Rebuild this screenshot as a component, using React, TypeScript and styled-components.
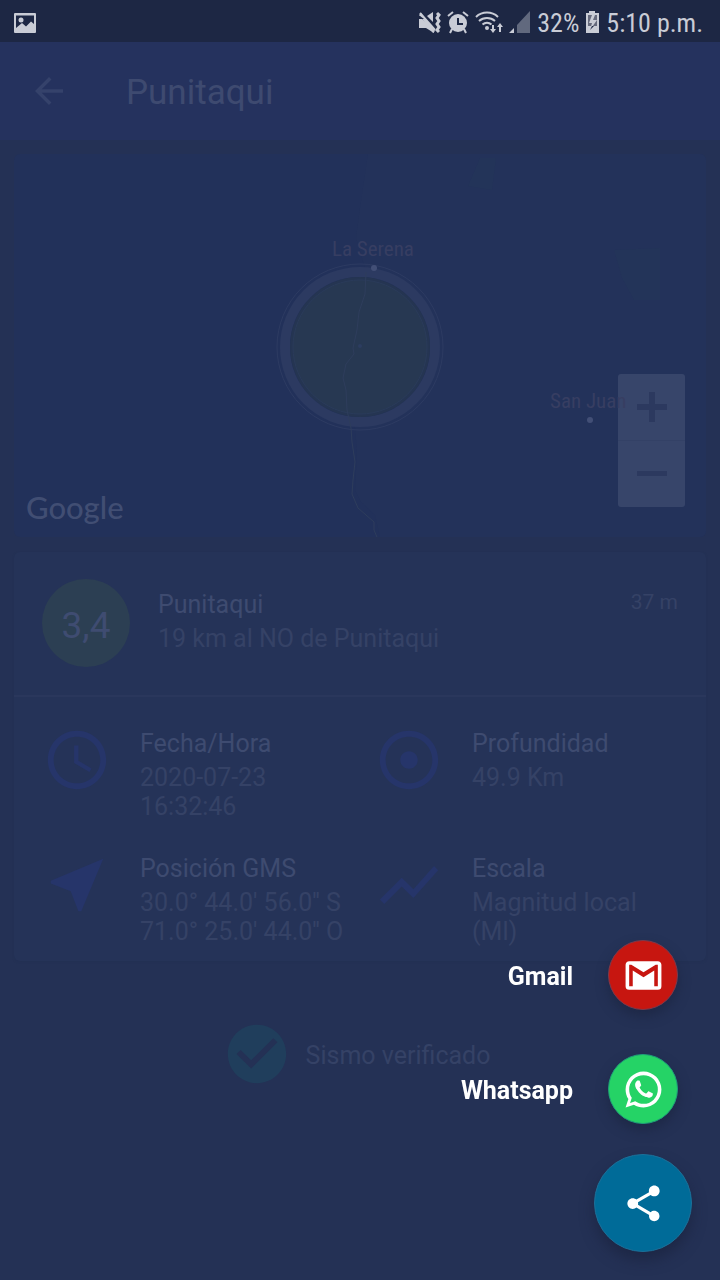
import React from "react";
import styled, { createGlobalStyle } from "styled-components";
import {
  MdAccessTime,
  MdAdjust,
  MdArrowBack,
  MdCheckCircle,
  MdNearMe,
  MdShare,
  MdShowChart,
} from "react-icons/md";

const GlobalStyle = createGlobalStyle`
  * { box-sizing: border-box; }
  body {
    margin: 0;
    background: #243155;
    font-family: Roboto, "Liberation Sans", sans-serif;
  }
  h1, h2, p { margin: 0; font-weight: 400; }
  button { border: 0; padding: 0; background: none; color: inherit; font: inherit; cursor: pointer; }
`;

const Page = styled.div`
  min-height: 100vh;
  background: #243155;
`;

const StatusBar = styled.div`
  display: flex;
  align-items: center;
  justify-content: space-between;
  height: 42px;
  padding: 4px 17px 0 14px;
  background: #1d2744;
  color: #c9ccd6;
  svg { display: block; }
`;

const StatusGroup = styled.div`
  display: flex;
  align-items: center;
  gap: 6px;
`;

const StatusText = styled.span`
  font-family: "Roboto Condensed", Roboto, sans-serif;
  font-size: 26px;
  line-height: 36px;
  white-space: nowrap;
`;

const AppBar = styled.header`
  display: flex;
  align-items: center;
  gap: 56px;
  height: 98px;
  padding: 0 28px;
  background: #25325e;
`;

const BackButton = styled.button`
  display: flex;
  color: #35426b;
`;

const AppTitle = styled.h1`
  padding-top: 4px;
  font-size: 35px;
  line-height: 42px;
  color: #3e4a70;
`;

const Main = styled.main`
  display: flex;
  flex-direction: column;
  padding: 14px 14px 0;
`;

const MapCard = styled.section`
  position: relative;
  height: 383px;
  margin-bottom: 15px;
  overflow: hidden;
  border-radius: 6px;
  background: #22315a;
`;

const MapDrawing = styled.svg`
  display: block;
  width: 100%;
  height: 100%;
`;

const Place = styled.span<{ $x: number; $y: number }>`
  position: absolute;
  left: calc(50% + ${(p) => p.$x}px);
  top: ${(p) => p.$y}px;
  font-family: "Roboto Condensed", Roboto, sans-serif;
  font-size: 21px;
  line-height: 24px;
  color: #373e62;
  white-space: nowrap;
`;

const GoogleMark = styled.span`
  position: absolute;
  left: 12px;
  bottom: 12px;
  font-family: Lato, sans-serif;
  font-size: 31px;
  font-weight: 500;
  line-height: 36px;
  color: #414e73;
`;

const ZoomControl = styled.div`
  position: absolute;
  right: 21px;
  bottom: 30px;
  width: 67px;
  border-radius: 3px;
  background: rgba(58, 72, 108, 0.88);
  overflow: hidden;
`;

const ZoomButton = styled.button`
  display: flex;
  align-items: center;
  justify-content: center;
  width: 100%;
  height: 66px;
  color: #2c395f;
  & + & { height: 67px; border-top: 1px solid #334166; }
`;

const DetailCard = styled.section`
  border-radius: 6px;
  background: #253358;
  box-shadow: 0 1px 2px #233053;
`;

const Summary = styled.div`
  display: flex;
  align-items: flex-start;
  gap: 28px;
  padding: 27px 28px 28px;
  border-bottom: 2px solid #2a375c;
`;

const Magnitude = styled.div`
  display: flex;
  align-items: center;
  justify-content: center;
  flex: none;
  width: 88px;
  height: 88px;
  padding-top: 6px;
  border-radius: 50%;
  background: #2c3f53;
  color: #3f4c71;
  font-size: 37px;
  line-height: 44px;
`;

const TextBlock = styled.div<{ $top: number }>`
  flex: 1;
  min-width: 0;
  padding-top: ${(p) => p.$top}px;
`;

const Title = styled.h2`
  margin-bottom: 5px;
  font-size: 25px;
  line-height: 29px;
  color: #3e4b70;
`;

const Value = styled.p`
  font-size: 25px;
  line-height: 29px;
  color: #354266;
  white-space: pre-line;
`;

const Age = styled.span`
  padding-top: 10px;
  font-size: 21px;
  line-height: 26px;
  color: #354266;
`;

const Facts = styled.div`
  display: grid;
  grid-template-columns: 1fr 1fr;
  row-gap: 29px;
  padding: 28px 0 15px 28px;
`;

const FactCell = styled.div`
  display: flex;
  gap: 28px;
  min-height: 96px;
  padding-right: 28px;
  svg { flex: none; color: #26356a; }
`;

const Verified = styled.div`
  display: flex;
  align-items: center;
  justify-content: center;
  gap: 14px;
  margin-top: 58px;
  padding-right: 8px;
  svg { flex: none; color: #203e5c; }
  ${Value} { padding-top: 2px; }
`;

const SpeedDial = styled.div`
  position: fixed;
  right: 28px;
  bottom: 28px;
  display: flex;
  flex-direction: column;
  align-items: flex-end;
`;

const DialAction = styled.button`
  display: flex;
  align-items: center;
  gap: 35px;
  margin: 0 14px 44px 0;
  color: #fff;
  & + & { margin-bottom: 30px; }
`;

const DialLabel = styled.span`
  padding-top: 4px;
  font-size: 25px;
  font-weight: 700;
  line-height: 30px;
`;

const Disc = styled.span<{ $color: string; $edge: string }>`
  display: flex;
  align-items: center;
  justify-content: center;
  width: 70px;
  height: 70px;
  border: 1px solid ${(p) => p.$edge};
  border-radius: 50%;
  background: ${(p) => p.$color};
  box-shadow: 0 6px 12px rgba(24, 31, 56, 0.5);
`;

const ShareButton = styled.button`
  display: flex;
  align-items: center;
  justify-content: center;
  width: 98px;
  height: 98px;
  border: 1px solid #1c7099;
  border-radius: 50%;
  background: #006b98;
  color: #fff;
  box-shadow: 0 8px 14px rgba(24, 31, 56, 0.55);
`;

const PictureIcon = () => (
  <svg width="22" height="20" viewBox="0 0 22 20" aria-hidden="true">
    <rect width="22" height="20" rx="1" fill="currentColor" />
    <path d="M2 2.500h18V11l-3-2.500-5 5-4-3.500-6 5z" fill="#1d2744" />
    <circle cx="7" cy="7" r="2.500" fill="currentColor" />
  </svg>
);

const MutedIcon = () => (
  <svg width="22" height="24" viewBox="0 0 22 24" fill="currentColor" aria-hidden="true">
    <path d="M0 8h3l12 11v3L7 17H0z" />
    <path d="M8 5l6-4v10zM2 2l14 18-2 2L0 4z" />
    <path d="M1 2l15 17" stroke="currentColor" strokeWidth="2" />
    <path d="M1 5l4 3H0v-3z" fill="#1d2744" />
    <path d="M18 2l2 2-2 3 2 3-2 3 2 3-2 3 2 2" fill="none" stroke="currentColor" strokeWidth="3" />
  </svg>
);

const AlarmIcon = () => (
  <svg width="22" height="24" viewBox="0 0 22 24" aria-hidden="true">
    <circle cx="11" cy="12" r="9" fill="currentColor" />
    <path d="M1 5l5-4M21 5l-5-4" stroke="currentColor" strokeWidth="2" />
    <path d="M5 18l-2 4M17 18l2 4" stroke="currentColor" strokeWidth="2" />
    <path d="M11 7v6h5" fill="none" stroke="#1d2744" strokeWidth="2" />
  </svg>
);

const WifiIcon = () => (
  <svg width="28" height="24" viewBox="0 0 28 24" fill="none" stroke="currentColor" strokeWidth="2" aria-hidden="true">
    <path d="M1 6a16 16 0 0 1 22 0M4 10a12 12 0 0 1 16 0M7.500 13.500a7 7 0 0 1 9 0" />
    <circle cx="12" cy="17" r="2" fill="currentColor" stroke="none" />
    <path d="M18 14v5M25 21v-5" />
    <path d="M15 18h6l-3 4zM22 16h6l-3-4z" fill="currentColor" stroke="none" />
  </svg>
);

const SignalIcon = () => (
  <svg width="22" height="24" viewBox="0 0 22 24" fill="currentColor" aria-hidden="true">
    <path d="M0 22h5v-5z" />
    <path d="M8 22h13V0L8 14z" opacity=".4" />
  </svg>
);

const BatteryIcon = () => (
  <svg width="15" height="24" viewBox="0 0 15 24" aria-hidden="true">
    <path d="M4 0h6v2h4v20H1V2h3z" fill="currentColor" />
    <path d="M3 4h9v11H3z" fill="#65697c" />
    <path d="M7 4L4 12h3l-2 7 7-10H8l2-5z" fill="currentColor" />
    <path d="M7 15l-2 4 4-4z" fill="#1d2744" />
  </svg>
);

const GmailIcon = () => (
  <svg width="43" height="43" viewBox="0 0 24 24" fill="currentColor" aria-hidden="true">
    <path d="M20 18h-2V9.250L12 13 6 9.250V18H4V6h1.200L12 10.250 18.800 6H20m0-2H4c-1.110 0-2 .89-2 2v12a2 2 0 0 0 2 2h16a2 2 0 0 0 2-2V6c0-1.110-.9-2-2-2z" />
  </svg>
);

const WhatsappIcon = () => (
  <svg width="43" height="43" viewBox="0 0 24 24" fill="currentColor" aria-hidden="true">
    <path d="M16.75,13.96C17,14.09 17.16,14.16 17.21,14.26C17.27,14.37 17.25,14.87 17,15.44C16.8,16 15.76,16.54 15.3,16.56C14.84,16.58 14.83,16.92 12.34,15.83C9.85,14.74 8.35,12.08 8.23,11.91C8.11,11.74 7.27,10.53 7.31,9.3C7.36,8.08 8,7.5 8.26,7.26C8.5,7 8.77,6.97 8.94,7H9.41C9.56,7 9.77,6.94 9.96,7.45L10.65,9.32C10.71,9.45 10.75,9.6 10.66,9.76L10.39,10.17L10,10.59C9.88,10.71 9.74,10.84 9.88,11.09C10,11.35 10.5,12.18 11.2,12.87C12.11,13.75 12.91,14.04 13.15,14.17C13.39,14.31 13.54,14.29 13.69,14.13L14.5,13.19C14.69,12.94 14.85,13 15.08,13.08L16.75,13.96M12,2A10,10 0 0,1 22,12A10,10 0 0,1 12,22C10.03,22 8.2,21.43 6.65,20.45L2,22L3.55,17.35C2.57,15.8 2,13.97 2,12A10,10 0 0,1 12,2M12,4A8,8 0 0,0 4,12C4,13.72 4.54,15.31 5.46,16.61L4.5,19.5L7.39,18.54C8.69,19.46 10.28,20 12,20A8,8 0 0,0 20,12A8,8 0 0,0 12,4Z" />
  </svg>
);

const COAST =
  "M352 118l-1 22-6 18-2 18-4 18 1 6-8 10-3 14 3 12 1 20 4 18 1 14 3 20-2 18-1 14 6 14 16 14 0 8 5 12 2 12";

const facts = [
  { icon: MdAccessTime, title: "Fecha/Hora", value: "2020-07-23\n16:32:46" },
  { icon: MdAdjust, title: "Profundidad", value: "49.9 Km" },
  { icon: MdNearMe, title: "Posición GMS", value: "30.0° 44.0' 56.0'' S\n71.0° 25.0' 44.0'' O" },
  { icon: MdShowChart, title: "Escala", value: "Magnitud local (Ml)" },
];

export default function App() {
  return (
    <Page>
      <GlobalStyle />
      <StatusBar>
        <PictureIcon />
        <StatusGroup>
          <MutedIcon />
          <AlarmIcon />
          <WifiIcon />
          <SignalIcon />
          <StatusText>32%</StatusText>
          <BatteryIcon />
          <StatusText>5:10 p.m.</StatusText>
        </StatusGroup>
      </StatusBar>

      <AppBar>
        <BackButton aria-label="Volver">
          <MdArrowBack size={42} />
        </BackButton>
        <AppTitle>Punitaqui</AppTitle>
      </AppBar>

      <Main>
        <MapCard>
          <MapDrawing viewBox="0 0 692 383" preserveAspectRatio="xMidYMid slice" aria-hidden="true">
            <path d="M354 0h338v383H366l-5-22-14-13-6-12 2-40-3-32-9-60 12-20 8-70-9-30 4-30z" fill="#23325a" />
            <path d="M466 4h16l-4 32-24-4zM600 96l46-2v52h-26l-12-22z" fill="#233459" />
            <circle cx="346" cy="193" r="75" fill="#22315a" stroke="#2c3a61" strokeWidth="10" />
            <circle cx="346" cy="193" r="70" fill="#253552" />
            <circle cx="346" cy="193" r="67" fill="#273852" stroke="#2a3b5a" />
            <circle cx="346" cy="193" r="83" fill="none" stroke="#2d3b62" />
            <path d={COAST} fill="none" stroke="#2e3d5c" />
            <circle cx="346" cy="192" r="2" fill="#2c3d60" />
            <circle cx="360" cy="114" r="3" fill="#424f76" />
            <circle cx="576" cy="266" r="3" fill="#424f76" />
          </MapDrawing>
          <GoogleMark>Google</GoogleMark>
          <ZoomControl>
            <ZoomButton aria-label="Acercar">
              <svg width="30" height="30" viewBox="0 0 30 30" fill="currentColor">
                <path d="M12 0h6v12h12v6H18v12h-6V18H0v-6h12z" />
              </svg>
            </ZoomButton>
            <ZoomButton aria-label="Alejar">
              <svg width="30" height="30" viewBox="0 0 30 30" fill="currentColor">
                <path d="M0 12h30v5H0z" />
              </svg>
            </ZoomButton>
          </ZoomControl>
          <Place $x={-28} $y={83}>La Serena</Place>
          <Place $x={190} $y={235}>San Juan</Place>
        </MapCard>

        <DetailCard>
          <Summary>
            <Magnitude>3,4</Magnitude>
            <TextBlock $top={11}>
              <Title>Punitaqui</Title>
              <Value>19 km al NO de Punitaqui</Value>
            </TextBlock>
            <Age>37 m</Age>
          </Summary>
          <Facts>
            {facts.map(({ icon: Icon, title, value }) => (
              <FactCell key={title}>
                <Icon size={70} />
                <TextBlock $top={4}>
                  <Title>{title}</Title>
                  <Value>{value}</Value>
                </TextBlock>
              </FactCell>
            ))}
          </Facts>
        </DetailCard>

        <Verified>
          <MdCheckCircle size={70} />
          <Value>Sismo verificado</Value>
        </Verified>
      </Main>

      <SpeedDial>
        <DialAction>
          <DialLabel>Gmail</DialLabel>
          <Disc $color="#c71610" $edge="#7d3a4c">
            <GmailIcon />
          </Disc>
        </DialAction>
        <DialAction>
          <DialLabel>Whatsapp</DialLabel>
          <Disc $color="#25d366" $edge="#1f9f7a">
            <WhatsappIcon />
          </Disc>
        </DialAction>
        <ShareButton aria-label="Compartir">
          <MdShare size={43} />
        </ShareButton>
      </SpeedDial>
    </Page>
  );
}
